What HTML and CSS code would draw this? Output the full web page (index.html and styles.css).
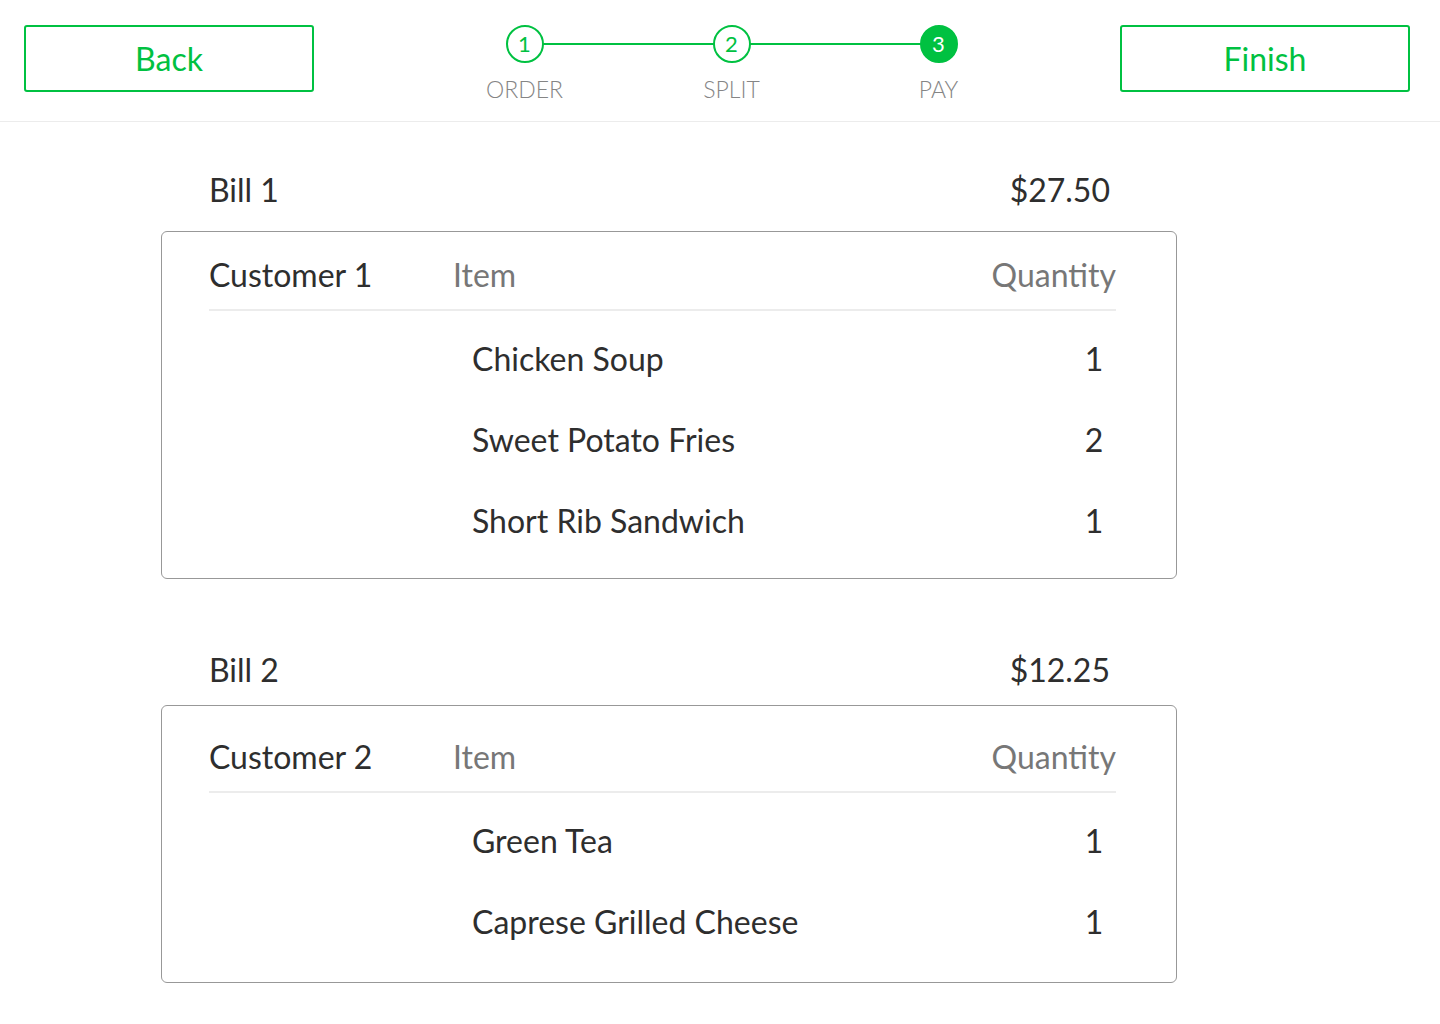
FILE: index.html
```html
<!DOCTYPE html>
<html lang="en">
<head>
<meta charset="utf-8">
<title>Pay</title>
<link rel="stylesheet" href="styles.css">
</head>
<body>
<header class="topbar">
  <button class="btn">Back</button>
  <div class="stepper">
    <div class="step">
      <div class="circle">1</div>
      <div class="label">ORDER</div>
    </div>
    <div class="connector"></div>
    <div class="step">
      <div class="circle">2</div>
      <div class="label">SPLIT</div>
    </div>
    <div class="connector"></div>
    <div class="step">
      <div class="circle active">3</div>
      <div class="label">PAY</div>
    </div>
  </div>
  <button class="btn">Finish</button>
</header>

<main class="main">
  <section class="bill">
    <div class="bill-head">
      <span>Bill 1</span>
      <span>$27.50</span>
    </div>
    <div class="card">
      <div class="card-head">
        <span class="customer">Customer 1</span>
        <span class="col-title">Item</span>
        <span class="col-title">Quantity</span>
      </div>
      <div class="row"><span></span><span>Chicken Soup</span><span class="qty">1</span></div>
      <div class="row"><span></span><span>Sweet Potato Fries</span><span class="qty">2</span></div>
      <div class="row"><span></span><span>Short Rib Sandwich</span><span class="qty">1</span></div>
    </div>
  </section>

  <section class="bill bill-second">
    <div class="bill-head">
      <span>Bill 2</span>
      <span>$12.25</span>
    </div>
    <div class="card">
      <div class="card-head">
        <span class="customer">Customer 2</span>
        <span class="col-title">Item</span>
        <span class="col-title">Quantity</span>
      </div>
      <div class="row"><span></span><span>Green Tea</span><span class="qty">1</span></div>
      <div class="row"><span></span><span>Caprese Grilled Cheese</span><span class="qty">1</span></div>
    </div>
  </section>
</main>
</body>
</html>
```

FILE: styles.css
```css
* { box-sizing: border-box; }

body {
  margin: 0;
  background: #ffffff;
  color: #2e2e2e;
  font-family: Lato, "Open Sans", "Liberation Sans", sans-serif;
}

.topbar {
  display: flex;
  justify-content: space-between;
  align-items: flex-start;
  height: 122px;
  padding: 25px 30px 0 24px;
  border-bottom: 1px solid #ececec;
}

.btn {
  width: 290px;
  height: 67px;
  border: 2px solid #00c141;
  border-radius: 3px;
  background: #fff;
  color: #00c141;
  font-family: Lato, "Open Sans", sans-serif;
  font-size: 32px;
  padding: 0;
  cursor: pointer;
}

.stepper {
  display: flex;
  align-items: flex-start;
  margin-left: 29px;
}

.step {
  display: flex;
  flex-direction: column;
  align-items: center;
  width: 100px;
  flex: none;
  position: relative;
  z-index: 1;
}

.circle {
  width: 38px;
  height: 38px;
  border-radius: 50%;
  border: 2px solid #00c141;
  background: #fff;
  color: #00c141;
  font-size: 22px;
  line-height: 34px;
  text-align: center;
}

.circle.active {
  background: #00c141;
  color: #fff;
}

.label {
  margin-top: 13px;
  font-size: 23px;
  line-height: 26px;
  font-weight: 300;
  color: #858585;
}

.connector {
  flex: none;
  width: 171px;
  height: 2px;
  margin: 18px -32px 0;
  background: #00c141;
}

.main {
  padding: 0 0 60px 161px;
}

.bill {
  width: 1016px;
}

.bill-head {
  display: flex;
  justify-content: space-between;
  padding: 0 67px 0 48px;
  margin-top: 48px;
  font-size: 32px;
  line-height: 40px;
}

.card {
  margin-top: 21px;
  border: 1px solid #989898;
  border-radius: 6px;
  padding: 23px 60px 17px 47px;
}

.card-head {
  display: grid;
  grid-template-columns: 244px 1fr auto;
  font-size: 32px;
  line-height: 40px;
  padding-bottom: 14px;
  border-bottom: 2px solid #ececec;
  margin-bottom: 7px;
}

.customer { color: #2e2e2e; }

.col-title { color: #777777; }

.row {
  display: grid;
  grid-template-columns: 263px 1fr 44px;
  align-items: center;
  height: 81px;
  font-size: 32px;
  line-height: 40px;
}

.qty { text-align: center; }

.bill-second .bill-head { margin-top: 71px; }

.bill-second .card {
  margin-top: 15px;
  padding-top: 31px;
  padding-bottom: 20px;
}
```
